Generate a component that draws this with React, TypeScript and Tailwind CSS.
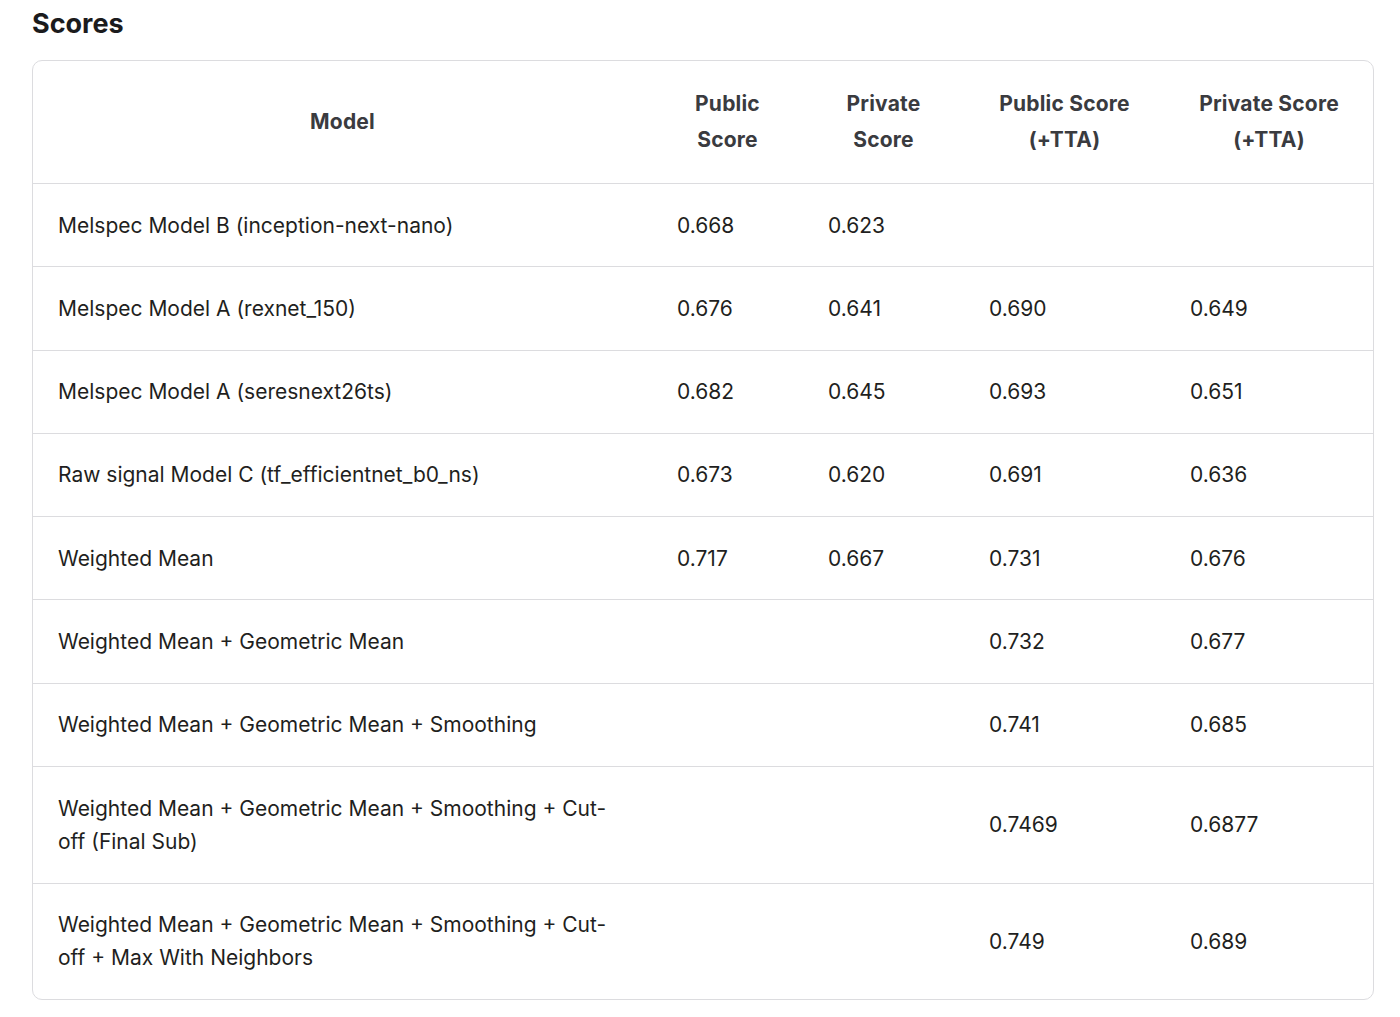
import React from "react";

const rows: [string, string, string, string, string][] = [
  ["Melspec Model B (inception-next-nano)", "0.668", "0.623", "", ""],
  ["Melspec Model A (rexnet_150)", "0.676", "0.641", "0.690", "0.649"],
  ["Melspec Model A (seresnext26ts)", "0.682", "0.645", "0.693", "0.651"],
  ["Raw signal Model C (tf_efficientnet_b0_ns)", "0.673", "0.620", "0.691", "0.636"],
  ["Weighted Mean", "0.717", "0.667", "0.731", "0.676"],
  ["Weighted Mean + Geometric Mean", "", "", "0.732", "0.677"],
  ["Weighted Mean + Geometric Mean + Smoothing", "", "", "0.741", "0.685"],
  ["Weighted Mean + Geometric Mean + Smoothing + Cut-off (Final Sub)", "", "", "0.7469", "0.6877"],
  ["Weighted Mean + Geometric Mean + Smoothing + Cut-off + Max With Neighbors", "", "", "0.749", "0.689"],
];

export default function App() {
  return (
    <div className="bg-white min-h-[1017px] pl-[32px] pr-[26px] pt-[6px] font-['Inter','Liberation_Sans',sans-serif]">
      <h2 className="text-[27px] leading-[36px] font-bold text-[#1b1b1d] mb-[18px]">Scores</h2>
      <div className="border border-[#dcdcdf] rounded-[10px] overflow-hidden w-[1342px]">
        <table className="w-full table-fixed border-collapse">
          <colgroup>
            <col className="w-[619px]" />
            <col className="w-[151px]" />
            <col className="w-[161px]" />
            <col className="w-[201px]" />
            <col className="w-[208px]" />
          </colgroup>
          <thead>
            <tr className="border-b border-[#dcdcdf]">
              {["Model", "Public Score", "Private Score", "Public Score (+TTA)", "Private Score (+TTA)"].map((h, i) => (
                <th
                  key={i}
                  className="text-center font-bold text-[21px] tracking-[0.2px] leading-[36.5px] text-[#3a3b3f] py-[24.5px] px-[22px]"
                >
                  {h}
                </th>
              ))}
            </tr>
          </thead>
          <tbody>
            {rows.map((r, ri) => (
              <tr key={ri} className={ri < rows.length - 1 ? "border-b border-[#dcdcdf]" : ""}>
                {r.map((c, ci) => (
                  <td
                    key={ci}
                    className={`text-left align-middle text-[21px] leading-[33.3px] text-[#1f1f21] py-[24.5px] ${ci === 0 ? "pl-[25px] pr-[30px]" : "px-[25px]"}`}
                  >
                    {c}
                  </td>
                ))}
              </tr>
            ))}
          </tbody>
        </table>
      </div>
    </div>
  );
}
